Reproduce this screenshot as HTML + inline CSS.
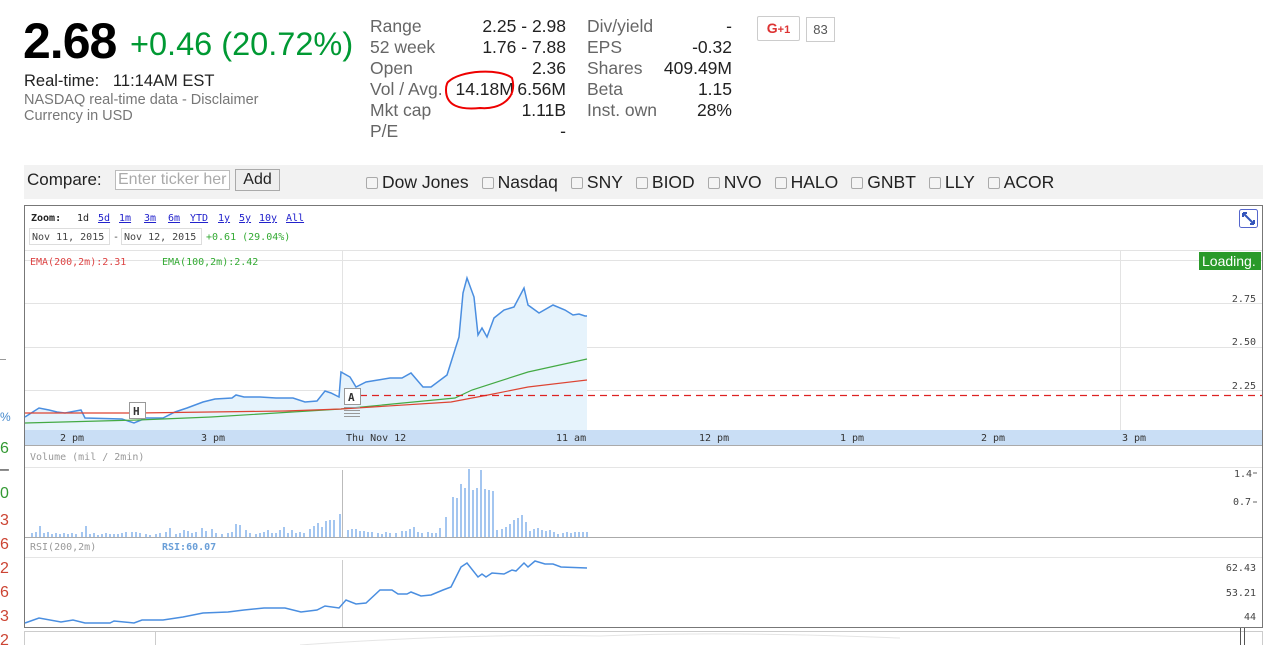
<!DOCTYPE html>
<html><head><meta charset="utf-8"><style>
*{margin:0;padding:0;box-sizing:border-box}
body{width:1282px;height:645px;overflow:hidden;background:#fff;font-family:"Liberation Sans",Arial,sans-serif;position:relative}
.a{position:absolute;white-space:nowrap}
.lab{color:#666;font-size:17.5px}
.val{color:#222;font-size:17.5px;text-align:right}
.cb{display:inline-block;width:12px;height:12px;border:1px solid #aaa;border-radius:2px;background:#f4f4f4;vertical-align:-1px;margin-right:4px}
.it{margin-right:13px}
</style></head><body>
<div class="a" style="left:23px;top:12px;font-size:50px;font-weight:bold;color:#000;letter-spacing:-1px">2.68</div>
<div class="a" style="left:130px;top:26px;font-size:32.5px;color:#093">+0.46 (20.72%)</div>
<div class="a" style="left:24px;top:72px;font-size:16.5px;color:#222">Real-time:&nbsp;&nbsp; 11:14AM EST</div>
<div class="a" style="left:24px;top:92px;font-size:14.5px;color:#777">NASDAQ real-time data - Disclaimer</div>
<div class="a" style="left:24px;top:108px;font-size:14.5px;color:#777">Currency in USD</div>

<div class="a lab" style="left:370px;top:16px;line-height:21px">Range<br>52 week<br>Open<br>Vol / Avg.<br>Mkt cap<br>P/E</div>
<div class="a val" style="left:440px;top:16px;width:126px;line-height:21px">2.25 - 2.98<br>1.76 - 7.88<br>2.36<br>14.18M&thinsp;6.56M<br>1.11B<br>-</div>
<svg class="a" style="left:440px;top:68px" width="80" height="45"><path d="M8 14 C20 2 60 0 72 10 C78 30 60 42 40 40 C20 42 6 38 6 22 C6 16 8 14 8 14" fill="none" stroke="#e00" stroke-width="2"/></svg>
<div class="a lab" style="left:587px;top:16px;line-height:21px">Div/yield<br>EPS<br>Shares<br>Beta<br>Inst. own</div>
<div class="a val" style="left:640px;top:16px;width:92px;line-height:21px">-<br>-0.32<br>409.49M<br>1.15<br>28%</div>
<div class="a" style="left:757px;top:16px;width:43px;height:25px;border:1px solid #ccc;border-radius:2px;color:#d33;font-weight:bold;font-size:14px;text-align:center;line-height:23px">G<span style="font-size:11px">+1</span></div>
<div class="a" style="left:806px;top:17px;width:29px;height:25px;border:1px solid #ccc;color:#555;font-size:13px;text-align:center;line-height:23px">83</div>

<div class="a" style="left:24px;top:165px;width:1239px;height:34px;background:#f2f2f2"></div>
<div class="a" style="left:27px;top:170px;font-size:17px;color:#222">Compare:</div>
<div class="a" style="left:115px;top:170px;width:115px;height:20px;border:1px solid #bbb;background:#fff;color:#aaa;font-size:16px;line-height:18px;padding-left:2px;overflow:hidden">Enter ticker her</div>
<div class="a" style="left:235px;top:169px;width:45px;height:22px;border:1px solid #aaa;background:#eee;font-size:16px;text-align:center;line-height:20px;color:#222">Add</div>
<div class="a" style="left:366px;top:172px;font-size:17.5px;color:#222"><span class="it"><span class="cb"></span>Dow Jones</span><span class="it"><span class="cb"></span>Nasdaq</span><span class="it"><span class="cb"></span>SNY</span><span class="it"><span class="cb"></span>BIOD</span><span class="it"><span class="cb"></span>NVO</span><span class="it"><span class="cb"></span>HALO</span><span class="it"><span class="cb"></span>GNBT</span><span class="it"><span class="cb"></span>LLY</span><span><span class="cb"></span>ACOR</span></div>

<svg class="a" style="left:0;top:0" width="1282" height="645" font-family="DejaVu Sans Mono,Liberation Mono,monospace">
<rect x="24.5" y="205.5" width="1238" height="422" fill="#fff" stroke="#777"/>
<text x="31" y="221" font-size="10" font-weight="bold" fill="#222">Zoom:</text>
<text x="77" y="221" font-size="10" fill="#222">1d</text>
<g font-size="10" fill="#22c" text-decoration="underline"><text x="98" y="221">5d</text><text x="119" y="221">1m</text><text x="144" y="221">3m</text><text x="168" y="221">6m</text><text x="190" y="221">YTD</text><text x="218" y="221">1y</text><text x="239" y="221">5y</text><text x="259" y="221">10y</text><text x="286" y="221">All</text></g>
<rect x="29.5" y="228.5" width="80" height="16" fill="#fff" stroke="#ddd"/><text x="32" y="240" font-size="10" fill="#444">Nov 11, 2015</text>
<text x="113" y="240" font-size="10" fill="#444">-</text>
<rect x="121.5" y="228.5" width="80" height="16" fill="#fff" stroke="#ddd"/><text x="124" y="240" font-size="10" fill="#444">Nov 12, 2015</text>
<text x="206" y="240" font-size="10" fill="#3a3">+0.61 (29.04%)</text>
<rect x="1239.5" y="209.5" width="18" height="18" fill="#fff" stroke="#56c" rx="2"/><path d="M1243 213 L1254 224 M1243 213 h4 M1243 213 v4 M1254 224 h-4 M1254 224 v-4" stroke="#35b" stroke-width="2" fill="none"/>
<g stroke="#e3e3e3"><line x1="25" y1="250.5" x2="1262" y2="250.5"/><line x1="25" y1="260.5" x2="1262" y2="260.5"/><line x1="25" y1="303.5" x2="1262" y2="303.5"/><line x1="25" y1="347.5" x2="1262" y2="347.5"/><line x1="25" y1="390.5" x2="1262" y2="390.5"/><line x1="342.5" y1="250" x2="342.5" y2="430"/><line x1="1120.5" y1="250" x2="1120.5" y2="430"/></g>
<text x="30" y="265" font-size="10" fill="#d44">EMA(200,2m):2.31</text>
<text x="162" y="265" font-size="10" fill="#3a3">EMA(100,2m):2.42</text>
<rect x="1199" y="252" width="62" height="18" fill="#2a9a2a"/><text x="1202" y="266" font-family="Liberation Sans,sans-serif" font-size="14" fill="#fff">Loading.</text>
<g font-size="10" fill="#444" text-anchor="end"><text x="1256" y="302">2.75</text><text x="1256" y="345">2.50</text><text x="1256" y="389">2.25</text></g>
<path d="M25 417 L39 408 L49 410 L57 412 L65 413 L81 410 L85 418 L122 419 L134 423 L146 418 L163 418 L175 412 L187 408 L203 402 L215 399 L232 398 L236 395 L244 397 L260 397 L276 398 L293 398 L305 402 L317 401 L325 391 L331 393 L339 397 L341 372 L350 377 L356 387 L366 382 L378 380 L390 378 L402 378 L411 373 L423 387 L431 387 L447 375 L459 337 L463 293 L467 278 L474 297 L478 335 L482 328 L487 337 L494 318 L504 310 L514 307 L524 288 L528 305 L539 313 L553 305 L565 310 L573 315 L579 314 L585 316 L587 316 L587 430 L25 430Z" fill="#e6f3fc"/>
<path d="M25 417 L39 408 L49 410 L57 412 L65 413 L81 410 L85 418 L122 419 L134 423 L146 418 L163 418 L175 412 L187 408 L203 402 L215 399 L232 398 L236 395 L244 397 L260 397 L276 398 L293 398 L305 402 L317 401 L325 391 L331 393 L339 397 L341 372 L350 377 L356 387 L366 382 L378 380 L390 378 L402 378 L411 373 L423 387 L431 387 L447 375 L459 337 L463 293 L467 278 L474 297 L478 335 L482 328 L487 337 L494 318 L504 310 L514 307 L524 288 L528 305 L539 313 L553 305 L565 310 L573 315 L579 314 L585 316 L587 316" fill="none" stroke="#4a8ee0" stroke-width="1.5"/>
<path d="M25 423 L138 420 L211 417 L341 409 L455 398 L472 390 L528 372 L587 359" fill="none" stroke="#4a4" stroke-width="1.2"/>
<path d="M25 413 L138 413 L285 411 L341 409 L451 402 L488 395 L528 387 L587 380" fill="none" stroke="#d43" stroke-width="1.2"/>
<line x1="360" y1="395.5" x2="1262" y2="395.5" stroke="#d22" stroke-width="1.3" stroke-dasharray="7,5"/>
<rect x="129.5" y="402.5" width="16" height="16" fill="#fff" stroke="#999"/><text x="133" y="415" font-size="11" font-weight="bold" fill="#333">H</text>
<rect x="344.5" y="388.5" width="16" height="16" fill="#fff" stroke="#999"/><text x="348" y="401" font-size="11" font-weight="bold" fill="#333">A</text>
<g stroke="#999"><line x1="344" y1="407.5" x2="360" y2="407.5"/><line x1="344" y1="410.5" x2="360" y2="410.5"/><line x1="344" y1="413.5" x2="360" y2="413.5"/><line x1="344" y1="416.5" x2="360" y2="416.5"/></g>
<rect x="25" y="430" width="1237" height="15" fill="#c9def5"/>
<g font-size="10" fill="#333"><text x="60" y="441">2 pm</text><text x="201" y="441">3 pm</text><text x="346" y="441">Thu Nov 12</text><text x="556" y="441">11 am</text><text x="699" y="441">12 pm</text><text x="840" y="441">1 pm</text><text x="981" y="441">2 pm</text><text x="1122" y="441">3 pm</text></g>
<line x1="25" y1="445.5" x2="1262" y2="445.5" stroke="#aaa"/>
<text x="30" y="460" font-size="10" fill="#999">Volume (mil / 2min)</text>
<line x1="25" y1="467.5" x2="1262" y2="467.5" stroke="#e5e5e5"/>
<line x1="342.5" y1="470" x2="342.5" y2="537" stroke="#bbb"/>
<g font-size="10" fill="#444" text-anchor="end"><text x="1252" y="477">1.4</text><text x="1251" y="505">0.7</text></g>
<path d="M1253 473h4M1253 502h4" stroke="#666"/>
<path stroke="#4a8ee0" stroke-width="1" d="M32 537V533M36 537V532M40 537V526M44 537V533M48 537V532M52 537V534M56 537V533M60 537V534M64 537V533M68 537V534M72 537V533M76 537V534M82 537V532M86 537V526M90 537V534M94 537V533M98 537V535M102 537V534M106 537V533M110 537V534M114 537V534M118 537V534M122 537V533M126 537V532M132 537V532M136 537V532M140 537V533M146 537V534M150 537V535M156 537V534M160 537V533M166 537V532M170 537V528M176 537V534M180 537V533M184 537V530M188 537V531M192 537V533M196 537V532M202 537V528M206 537V531M212 537V529M216 537V533M222 537V534M228 537V533M232 537V532M236 537V524M240 537V525M246 537V530M250 537V533M256 537V534M260 537V533M264 537V532M268 537V530M272 537V533M276 537V533M280 537V530M284 537V527M288 537V533M292 537V530M296 537V533M300 537V532M304 537V533M310 537V529M314 537V526M318 537V523M322 537V527M326 537V521M330 537V520M334 537V520M340 537V514M348 537V530M352 537V529M356 537V529M360 537V531M364 537V531M368 537V532M372 537V532M378 537V533M382 537V534M386 537V532M390 537V533M396 537V533M402 537V531M406 537V531M410 537V529M414 537V527M418 537V532M422 537V533M428 537V532M432 537V533M436 537V533M440 537V528M446 537V517M453 537V497M457 537V498M461 537V484M465 537V488M469 537V469M473 537V490M477 537V488M481 537V470M485 537V489M489 537V490M493 537V491M497 537V530M502 537V529M506 537V527M510 537V524M514 537V520M518 537V518M522 537V515M526 537V522M530 537V531M534 537V529M538 537V528M542 537V530M546 537V531M550 537V530M554 537V532M558 537V534M563 537V533M567 537V532M571 537V533M575 537V532M579 537V532M583 537V532M587 537V532"/>
<line x1="25" y1="537.5" x2="1262" y2="537.5" stroke="#aaa"/>
<text x="30" y="550" font-size="10" fill="#999">RSI(200,2m)</text>
<text x="162" y="550" font-size="10" font-weight="bold" fill="#6a9fd8">RSI:60.07</text>
<line x1="25" y1="557.5" x2="1262" y2="557.5" stroke="#e5e5e5"/>
<line x1="342.5" y1="560" x2="342.5" y2="627" stroke="#ccc"/>
<g font-size="10" fill="#444" text-anchor="end"><text x="1256" y="571">62.43</text><text x="1256" y="596">53.21</text><text x="1256" y="620">44</text></g>
<path d="M25 623 L39 618 L61 622 L73 620 L85 623 L110 623 L114 621 L134 623 L142 620 L163 620 L183 617 L203 613 L228 612 L244 610 L264 608 L285 608 L301 612 L317 610 L325 606 L339 608 L346 600 L356 604 L366 603 L380 590 L392 590 L398 594 L407 594 L411 592 L421 596 L431 595 L443 590 L451 587 L461 567 L467 563 L478 577 L482 574 L486 577 L492 573 L504 574 L512 570 L516 571 L524 563 L528 567 L535 561 L545 564 L553 564 L561 567 L587 568" fill="none" stroke="#4a8ee0" stroke-width="1.5"/>
<rect x="24.5" y="631.5" width="1238" height="20" fill="#fff" stroke="#ccc"/>
<line x1="155.5" y1="632" x2="155.5" y2="645" stroke="#ccc"/>
<path d="M300 645 C400 638 500 634 600 636 C700 632 800 634 900 638" fill="none" stroke="#e5e5e5"/>
<path d="M1240.5 628v17M1244.5 628v17" stroke="#555"/>
<line x1="0" y1="359.5" x2="6" y2="359.5" stroke="#999"/>
</svg>
<div class="a" style="left:0;top:410px;font-size:12px;color:#48c">%</div>
<div class="a" style="left:0;top:437px;font-size:16px;line-height:24px;color:#393">6</div>
<div class="a" style="left:0;top:461px;font-size:16px;color:#222">–</div>
<div class="a" style="left:0;top:485px;font-size:16px;color:#393">0</div>
<div class="a" style="left:0;top:509px;font-size:16px;line-height:24px;color:#c43">3<br>6<br>2<br>6<br>3<br>2</div>
</body></html>
